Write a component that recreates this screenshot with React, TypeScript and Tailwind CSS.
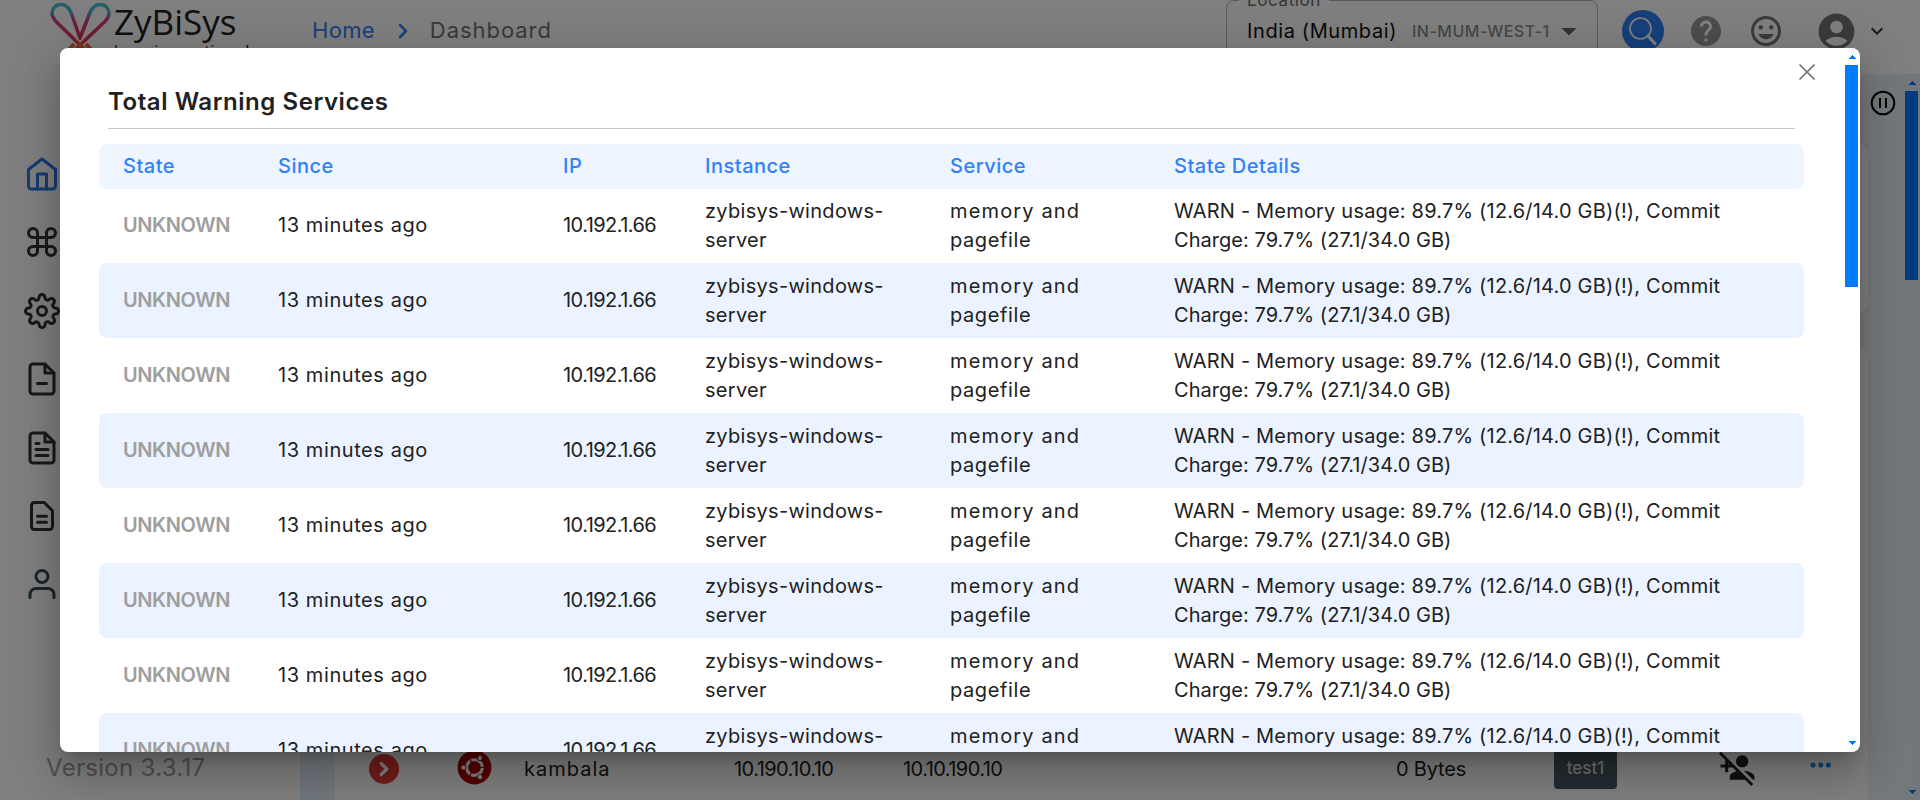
import type { ReactNode } from "react";
import { FiChevronRight, FiCommand, FiFileMinus, FiFileText, FiHome, FiSettings, FiUser } from "react-icons/fi";
import { MdAccountCircle, MdArrowDropDown, MdExpandMore, MdHelp, MdMood, MdPersonAddDisabled } from "react-icons/md";
import { FaUbuntu } from "react-icons/fa";

const GRID = "grid grid-cols-[155px_285px_142px_245px_224px_1fr] items-center pl-6 rounded-lg";

const services = Array.from({ length: 8 }, (_, id) => ({
  id,
  state: "UNKNOWN",
  since: "13 minutes ago",
  ip: "10.192.1.66",
  instance: ["zybisys-windows-", "server"],
  service: ["memory and", "pagefile"],
  details: ["WARN - Memory usage: 89.7% (12.6/14.0 GB)(!), Commit", "Charge: 79.7% (27.1/34.0 GB)"],
}));

function Logo() {
  return (
    <svg width="64" height="60" viewBox="0 0 64 60" fill="none" className="shrink-0">
      <defs>
        <linearGradient id="loop" x1="0" y1="3" x2="0" y2="46" gradientUnits="userSpaceOnUse">
          <stop offset="0" stopColor="#48c4d8" />
          <stop offset="0.2" stopColor="#48b4cc" />
          <stop offset="0.38" stopColor="#d0409c" />
          <stop offset="0.75" stopColor="#e0305c" />
          <stop offset="1" stopColor="#f05a3c" />
        </linearGradient>
      </defs>
      <g stroke="url(#loop)" strokeWidth="3.500" strokeLinecap="round" strokeLinejoin="round">
        <path d="M31 38 22 12.500C19.500 7 16 4.500 12 4.500 6.500 4.500 3 8.500 3 13.500 3 17 5 19 7 21.500L31 45" />
        <path d="M31 38 41 12.500C43.500 7 47 4.500 51 4.500 56.500 4.500 60 8.500 60 13.500 60 17 58 19 56 21.500L31 45" />
      </g>
      <path d="m19 51 6-7M43 51l-6-7M25 51l6-6 6 6" stroke="#e8683c" strokeWidth="4" />
    </svg>
  );
}

function SearchButton() {
  return (
    <svg width="42" height="42" viewBox="0 0 42 42" fill="none">
      <circle cx="21" cy="21" r="21" fill="#2f80f5" />
      <circle cx="18.500" cy="18.500" r="10.500" stroke="#fff" strokeWidth="1.700" />
      <path d="m26 26 7 7.500" stroke="#fff" strokeWidth="3.200" strokeLinecap="round" />
    </svg>
  );
}

function Document() {
  return (
    <svg width="36" height="36" viewBox="0 0 24 24" fill="none" stroke="currentColor" strokeWidth="2" strokeLinecap="round" strokeLinejoin="round">
      <path d="M13.500 3H7a2 2 0 0 0-2 2v14a2 2 0 0 0 2 2h10a2 2 0 0 0 2-2V8.500zM9 12.200h6M9 16.200h6" />
    </svg>
  );
}

function Arrow({ up = false }: { up?: boolean }) {
  return (
    <svg width="8" height="4" viewBox="0 0 8 4" fill="#007bff" shapeRendering="crispEdges">
      <path d={up ? "M4 0 8 4H0z" : "M0 0h8L4 4z"} />
    </svg>
  );
}

function Header() {
  return (
    <header className="flex h-[74px] shrink-0 bg-white pl-[49px]">
      <div className="flex w-[263px]">
        <Logo />
        <div className="pl-px pt-px font-['Open_Sans'] text-[#222]">
          <div className="h-[41px] text-[35px] leading-[41px]">ZyBiSys</div>
          <div className="-mt-[3px] whitespace-nowrap text-base leading-6">keep innovating...!</div>
        </div>
      </div>
      <nav className="flex h-[61px] w-[914px] items-center text-[22px]">
        <span className="tracking-[0.3px] text-[#2f80f5]">Home</span>
        <FiChevronRight size={24} strokeWidth={2.5} className="ml-[16px] mr-[15px] text-[#2f80f5]" />
        <span className="tracking-[0.95px] text-[#757575]">Dashboard</span>
      </nav>
      <div className="relative flex h-[60px] w-[372px] items-center rounded-t-lg border border-[#b5b5b5] pl-5 pt-0.5">
        <span className="absolute -top-[13px] left-3 bg-white px-2 text-[17px] leading-6 tracking-[0.6px] text-[#6b6b6b]">Location</span>
        <span className="w-[165px] text-xl tracking-[0.6px] text-[#111]">India (Mumbai)</span>
        <span className="w-[139px] whitespace-nowrap text-base font-medium tracking-[0.5px] text-[#8e8e8e]">IN-MUM-WEST-1</span>
        <MdArrowDropDown size={36} className="shrink-0 text-[#666]" />
      </div>
      <div className="flex h-[61px] items-center pl-[24px] pt-px">
        <SearchButton />
        <MdHelp size={36} className="ml-[24px] text-[#9a9a9a]" />
        <MdMood size={36} className="ml-[24px] text-[#757575]" />
        <MdAccountCircle size={43} className="ml-[31px] text-[#757575]" />
        <MdExpandMore size={24} className="ml-[7px] text-[#333]" />
      </div>
    </header>
  );
}

function Sidebar() {
  return (
    <aside className="flex w-[300px] shrink-0 flex-col bg-white pt-[82px]">
      <div className="flex flex-col gap-[32.400px] pl-6 text-[#333]">
        <FiHome size={36} className="text-[#2a76e8]" />
        <FiCommand size={36} />
        <FiSettings size={36} />
        <FiFileMinus size={36} />
        <FiFileText size={36} />
        <Document />
        <FiUser size={36} className="text-[#344a54]" />
      </div>
      <div className="mt-[148px] pl-[46px] text-2xl leading-9 tracking-[0.3px] text-[#a0a0a0]">Version 3.3.17</div>
    </aside>
  );
}

function Instances() {
  return (
    <main className="flex min-w-0 flex-1 bg-[linear-gradient(to_right,#dfeefa_0%,#e6f0f8_2%,#eef2f5_50%,#eef2f5_97%,#e2eff8_100%)]">
      <div className="flex w-[1568px] flex-col gap-7 pl-[35px] pt-[67px]">
        <div className="h-[175px] shrink-0 rounded-2xl bg-white" />
        <div className="flex flex-1 flex-col justify-end rounded-t-2xl bg-white">
          <div className="flex h-[61px] items-center pb-px pl-[34px] text-xl text-[#222]">
            <div className="flex size-[30px] items-center justify-center rounded-full bg-[#e53935] text-white">
              <FiChevronRight size={22} strokeWidth={3.5} />
            </div>
            <FaUbuntu size={35} className="-mt-1 ml-[58px] text-[#a80000]" />
            <span className="ml-[32px] w-[210px] tracking-[1px]">kambala</span>
            <span className="w-[169px] tracking-[-0.55px]">10.190.10.10</span>
            <span className="w-[493px] tracking-[-0.55px]">10.10.190.10</span>
            <span className="w-[158px] tracking-[-0.2px]">0 Bytes</span>
            <span className="flex h-[40px] w-[63px] items-center justify-center rounded bg-[#445963] text-[17px] font-medium text-[#ddd]">test1</span>
            <MdPersonAddDisabled size={37} className="-mt-1 ml-[102px] text-[#222]" />
            <svg width="22" height="6" viewBox="0 0 22 6" fill="#2090e8" className="-mt-2 ml-[54px]">
              <circle cx="3" cy="3" r="2.600" />
              <circle cx="10.700" cy="3" r="2.600" />
              <circle cx="18.400" cy="3" r="2.600" />
            </svg>
          </div>
        </div>
      </div>
      <div className="flex flex-1 justify-between pr-0.5">
        <svg width="26" height="26" viewBox="0 0 26 26" fill="none" stroke="#000" strokeWidth="2" className="ml-0.5 mt-4">
          <circle cx="13" cy="13" r="11.300" />
          <path d="M10 8v10M16 8v10" />
        </svg>
        <div className="flex w-[13px] flex-col items-center pt-[7px]">
          <Arrow up />
          <div className="mt-1.5 h-[189px] w-full bg-[#007bff]" />
          <div className="mt-auto pb-1.5">
            <Arrow />
          </div>
        </div>
      </div>
    </main>
  );
}

function Lines({ lines, className }: { lines: string[]; className: string[] }) {
  return (
    <div>
      {lines.map((line, i) => (
        <div key={line} className={`whitespace-nowrap ${className[i]}`}>
          {line}
        </div>
      ))}
    </div>
  );
}

function HeadCell({ children }: { children: ReactNode }) {
  return <div>{children}</div>;
}

function WarningDialog() {
  return (
    <div className="absolute inset-0 flex items-center justify-center bg-black/50">
      <section className="flex h-[704px] w-[1800px] overflow-hidden rounded-lg bg-white shadow-[0_11px_15px_-7px_rgba(0,0,0,0.2),0_24px_38px_3px_rgba(0,0,0,0.14),0_9px_46px_8px_rgba(0,0,0,0.12)]">
        <div className="flex w-[1785px] flex-col pl-[39px]">
          <div className="flex h-[80px] w-[1696px] shrink-0 justify-between pl-[9px]">
            <h2 className="pt-[36px] text-2xl font-semibold leading-9 tracking-[0.56px] text-[#212121]">Total Warning Services</h2>
            <svg width="16" height="16" viewBox="0 0 16 16" stroke="#777" strokeWidth="1.600" className="-mr-[20px] mt-4">
              <path d="m.5.5 15 15M15.500.5l-15 15" />
            </svg>
          </div>
          <div className="ml-[9px] h-px w-[1687px] shrink-0 bg-[#c8c8c8]" />
          <div className={`${GRID} mt-[15px] h-[45px] w-[1705px] shrink-0 bg-[#eef5ff] pb-0.5 text-xl font-medium tracking-[0.5px] text-[#2f80ff]`}>
            <HeadCell>State</HeadCell>
            <HeadCell>Since</HeadCell>
            <HeadCell>IP</HeadCell>
            <HeadCell>Instance</HeadCell>
            <HeadCell>Service</HeadCell>
            <HeadCell>State Details</HeadCell>
          </div>
          <div className="-mt-px w-[1705px]">
            {services.map((s) => (
              <div key={s.id} className={`${GRID} h-[75px] text-xl leading-[28.800px] text-[#212121] even:bg-[#eaf3ff]`}>
                <div className="font-semibold tracking-[-0.4px] text-[#9e9e9e]">{s.state}</div>
                <div className="tracking-[0.58px]">{s.since}</div>
                <div className="tracking-[-0.55px]">{s.ip}</div>
                <Lines lines={s.instance} className={["tracking-[0.3px]", "tracking-[0.3px]"]} />
                <Lines lines={s.service} className={["tracking-[1.15px]", "tracking-[0.6px]"]} />
                <Lines lines={s.details} className={["tracking-[0.19px]", "tracking-[0.04px]"]} />
              </div>
            ))}
          </div>
        </div>
        <div className="flex w-[13px] flex-col items-center pt-[7px]">
          <Arrow up />
          <div className="mt-1.5 h-[222px] w-full bg-[#007bff]" />
          <div className="mt-auto pb-[7px]">
            <Arrow />
          </div>
        </div>
      </section>
    </div>
  );
}

export default function App() {
  return (
    <div className="relative flex h-[800px] w-[1920px] flex-col overflow-hidden bg-white font-['Inter',sans-serif]">
      <Header />
      <div className="flex min-h-0 flex-1">
        <Sidebar />
        <Instances />
      </div>
      <WarningDialog />
    </div>
  );
}
